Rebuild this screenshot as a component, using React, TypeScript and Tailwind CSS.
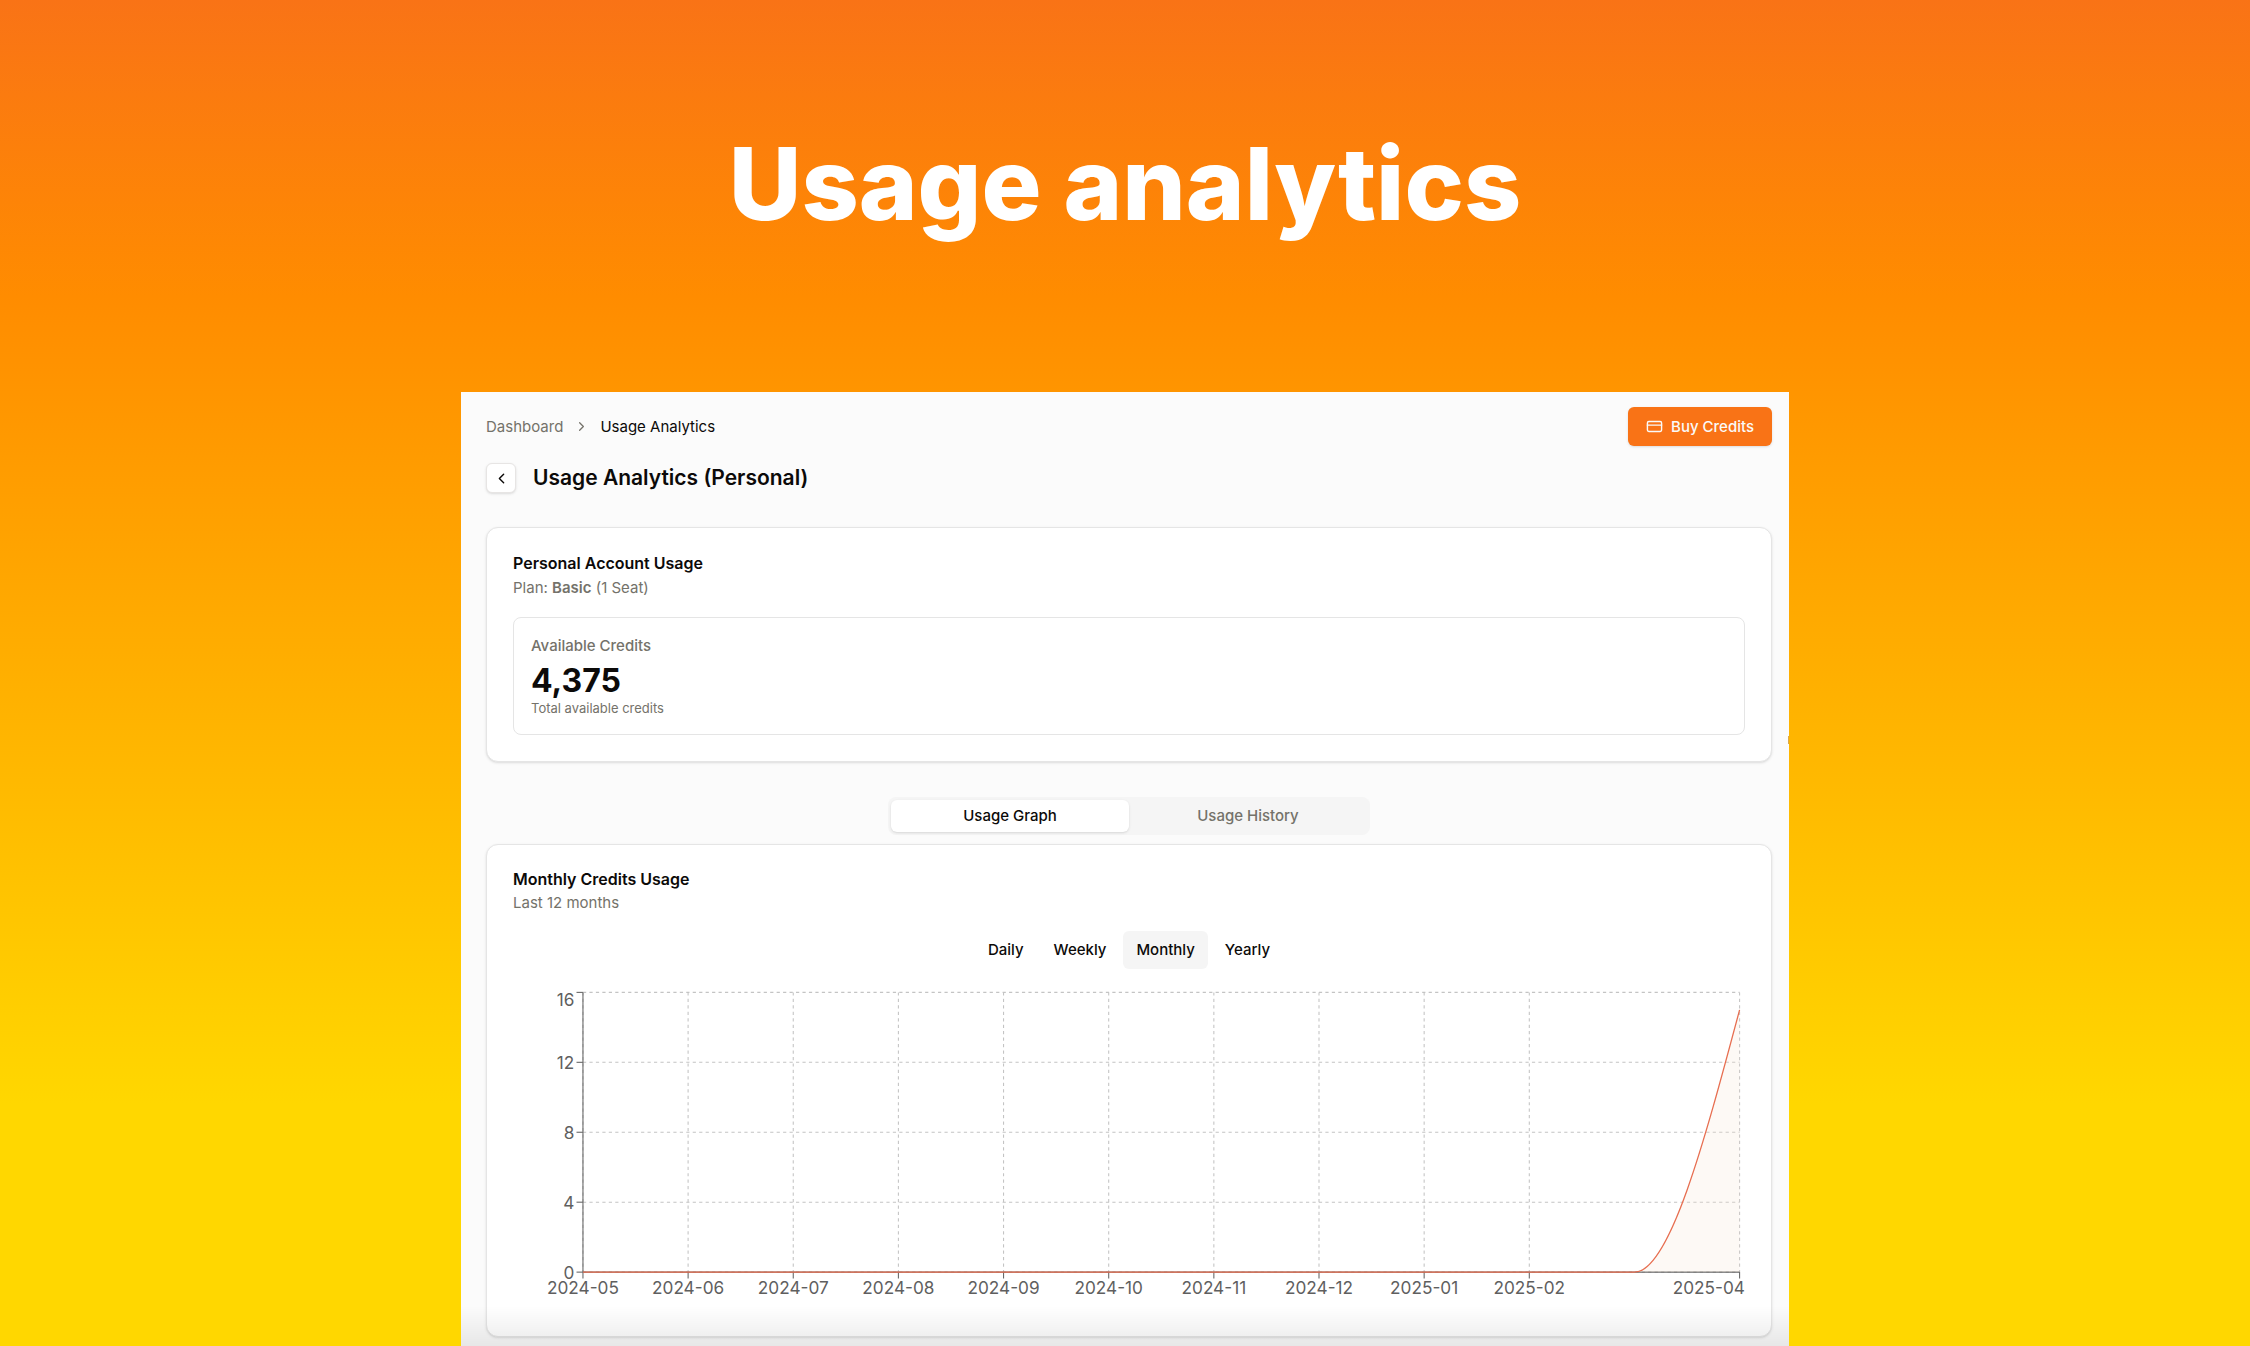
import { ChevronLeft, ChevronRight, CreditCard } from "lucide-react";

const months = [
  "2024-05",
  "2024-06",
  "2024-07",
  "2024-08",
  "2024-09",
  "2024-10",
  "2024-11",
  "2024-12",
  "2025-01",
  "2025-02",
  "2025-03",
  "2025-04",
];
const credits = [0, 4, 8, 12, 16];
const ranges = ["Daily", "Weekly", "Monthly", "Yearly"];

// Plot area inside the 1145 x 300 chart drawing
const LEFT = 65;
const RIGHT = 1140;
const TOP = 5;
const BOTTOM = 265;

const xAt = (i: number) => LEFT + ((RIGHT - LEFT) * i) / (months.length - 1);
const yAt = (v: number) => BOTTOM - ((BOTTOM - TOP) * v) / 16;

function UsageChart() {
  const step = xAt(1) - xAt(0);
  const start = xAt(10);
  const peak = yAt(15);
  const rise = `C${start + step / 3},${BOTTOM} ${RIGHT - step / 3},${(peak + BOTTOM) / 2} ${RIGHT},${peak}`;
  return (
    <svg viewBox="0 0 1145 300" className="block w-full overflow-visible" role="img" aria-label="Monthly credits usage">
      <g stroke="#c4c4c4" strokeDasharray="3 3">
        {credits.map((v) => (
          <line key={v} x1={LEFT} x2={RIGHT} y1={yAt(v)} y2={yAt(v)} />
        ))}
        {months.map((m, i) => (i === 10 ? null : <line key={m} x1={xAt(i)} x2={xAt(i)} y1={TOP} y2={BOTTOM} />))}
      </g>
      <g stroke="#666666">
        <line x1={LEFT} x2={RIGHT} y1={BOTTOM} y2={BOTTOM} />
        <line x1={LEFT} x2={LEFT} y1={TOP} y2={BOTTOM} />
        {credits.map((v) => (
          <line key={v} x1={LEFT - 6} x2={LEFT} y1={yAt(v)} y2={yAt(v)} />
        ))}
        {months.map((m, i) => (i === 10 ? null : <line key={m} x1={xAt(i)} x2={xAt(i)} y1={BOTTOM} y2={BOTTOM + 6} />))}
      </g>
      <path d={`M${start},${BOTTOM}${rise}V${BOTTOM}Z`} fill="#f4e4d0" fillOpacity="0.22" />
      <path d={`M${LEFT},${BOTTOM}H${start}${rise}`} fill="none" stroke="#e76e50" strokeWidth="1.2" />
      <g fill="#5f5f5f" fontSize="16">
        {credits.map((v) => (
          <text key={v} x={LEFT - 8} y={v === 16 ? 18 : yAt(v) + 6} textAnchor="end">
            {v}
          </text>
        ))}
        {months.map((m, i) =>
          i === 10 ? null : (
            <text key={m} x={i === 11 ? RIGHT + 5 : xAt(i)} y={BOTTOM + 20} textAnchor={i === 11 ? "end" : "middle"}>
              {m}
            </text>
          ),
        )}
      </g>
    </svg>
  );
}

export default function App() {
  return (
    <main className="flex min-h-screen flex-col items-center bg-[linear-gradient(#f97316_0%,#ff8c00_22%,#ffd700_82%)] font-['Inter',sans-serif] text-[15px] leading-5 text-[#0c0a09]">
      <h1 className="pt-[124px] pb-[148px] text-[100px] leading-[120px] font-extrabold text-white">Usage analytics</h1>

      <section className="relative flex w-full max-w-[1328px] grow flex-col bg-[#fbfbfb] pt-[15px] pr-[17px] pb-2 pl-[25px]">
        <header className="flex items-center justify-between">
          <nav aria-label="Breadcrumb" className="flex items-center gap-[11px]">
            <a href="#dashboard" className="text-[#74726a]">
              Dashboard
            </a>
            <ChevronRight className="size-[15px] text-[#74726a]" strokeWidth={2} />
            <span aria-current="page">Usage Analytics</span>
          </nav>
          <button className="flex h-[39px] items-center gap-2 rounded-md bg-[#f97316] px-[18px] font-medium text-[#fafaf9] shadow-sm">
            <CreditCard className="size-[17px]" strokeWidth={2} />
            Buy Credits
          </button>
        </header>

        <div className="mt-[17px] flex items-center gap-[17px]">
          <button
            aria-label="Back"
            className="flex size-[30px] items-center justify-center rounded-md border border-[#e7e5e4] bg-white shadow-sm"
          >
            <ChevronLeft className="size-[17px]" strokeWidth={2} />
          </button>
          <h2 className="text-[21px] leading-7 font-semibold">Usage Analytics (Personal)</h2>
        </div>

        <div className="mt-[34px] rounded-xl border border-[#e5e5e5] bg-white px-[26px] pt-[25px] pb-[26px] shadow">
          <h3 className="text-base leading-5 font-semibold">Personal Account Usage</h3>
          <p className="mt-[5px] text-[#74726a]">
            Plan: <strong className="font-semibold">Basic</strong> (1 Seat)
          </p>
          <div className="mt-[19px] rounded-lg border border-[#e5e5e5] px-[17px] pt-[18px] pb-[17px]">
            <p className="font-medium text-[#74726a]">Available Credits</p>
            <p className="mt-[7px] text-[32px] leading-9 font-bold">4,375</p>
            <p className="text-[13px] leading-[18px] text-[#74726a]">Total available credits</p>
          </div>
        </div>

        <div role="tablist" className="mx-auto mt-[35px] grid h-[38px] w-[482px] grid-cols-2 rounded-lg bg-[#f5f5f5] p-[3px] font-medium">
          <button role="tab" aria-selected="true" className="rounded-md bg-white shadow">
            Usage Graph
          </button>
          <button role="tab" aria-selected="false" className="rounded-md text-[#74726a]">
            Usage History
          </button>
        </div>

        <div className="mt-[9px] rounded-xl border border-[#e5e5e5] bg-white px-[26px] pt-6 pb-[26px] shadow">
          <h3 className="text-base leading-5 font-semibold">Monthly Credits Usage</h3>
          <p className="mt-1 text-[#74726a]">Last 12 months</p>
          <div className="my-[18px] flex justify-center gap-1">
            {ranges.map((r) => (
              <button
                key={r}
                aria-pressed={r === "Monthly"}
                className="h-[38px] rounded-md px-[13px] font-medium aria-pressed:bg-[#f5f5f5]"
              >
                {r}
              </button>
            ))}
          </div>
          <UsageChart />
        </div>

        <div className="pointer-events-none absolute inset-x-0 bottom-0 h-10 bg-linear-to-b from-transparent to-black/8" />
        <div className="pointer-events-none absolute top-[344px] right-0 h-2 w-px bg-[#d9a94f]" />
      </section>
    </main>
  );
}
